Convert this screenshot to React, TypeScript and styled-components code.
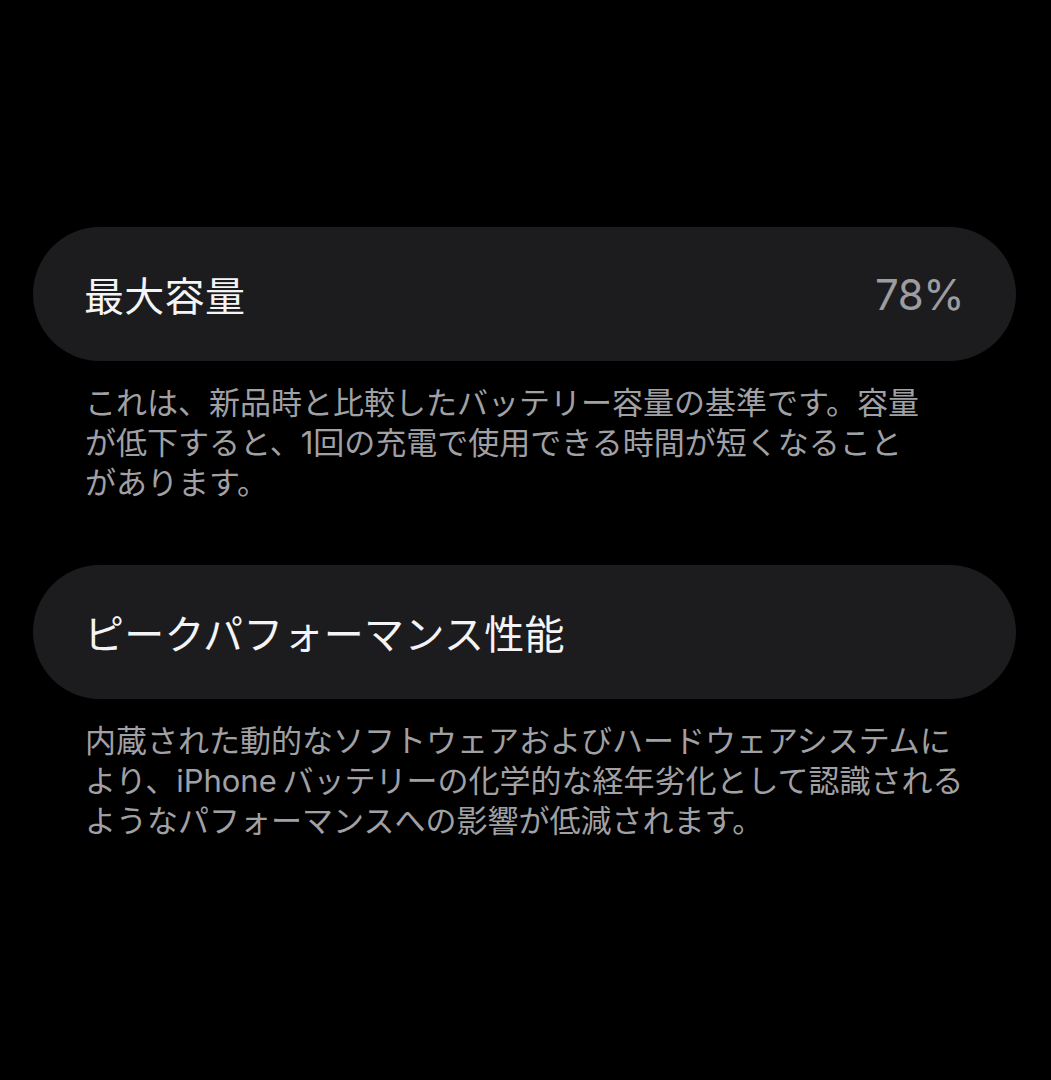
import styled, { createGlobalStyle } from "styled-components"

const GlobalStyle = createGlobalStyle`
  html, body {
    margin: 0;
    padding: 0;
    background: #000;
  }
  body {
    font-family: Inter, "Noto Sans CJK JP", sans-serif;
    -webkit-font-smoothing: antialiased;
  }
`

const Page = styled('div')`
  width: 1051px;
  height: 1080px;
  box-sizing: border-box;
  background: #000;
  padding: 227px 35px 0 33px;
  display: flex;
  flex-direction: column;
`

const Section = styled('section')`
  display: flex;
  flex-direction: column;
  margin-bottom: 62px;
`

const Card = styled('div')`
  height: 134px;
  border-radius: 67px;
  background: #1c1c1e;
  display: flex;
  align-items: center;
  justify-content: space-between;
  padding: 0 52px 0 51px;
  box-sizing: border-box;
`

const Title = styled('span')`
  font-family: "Noto Sans CJK JP", sans-serif;
  font-size: 40px;
  color: #f4f4f6;
  letter-spacing: 0.3px;
`

const Value = styled('span')`
  font-family: Inter, sans-serif;
  font-size: 42px;
  color: #9c9ca1;
  letter-spacing: -0.5px;
`

const Note = styled('p')`
  margin: 22px 0 0;
  padding-left: 52px;
  font-family: Inter, "Noto Sans CJK JP", sans-serif;
  font-size: 31px;
  line-height: 40px;
  color: #a0a0a5;
`

const Line = styled('span')`
  display: block;
  white-space: nowrap;
`

const sections = [
  {
    title: "最大容量",
    value: "78%",
    lines: [
      "これは、新品時と比較したバッテリー容量の基準です。容量",
      "が低下すると、1回の充電で使用できる時間が短くなること",
      "があります。",
    ],
  },
  {
    title: "ピークパフォーマンス性能",
    lines: [
      "内蔵された動的なソフトウェアおよびハードウェアシステムに",
      "より、iPhone\u2009バッテリーの化学的な経年劣化として認識される",
      "ようなパフォーマンスへの影響が低減されます。",
    ],
  },
]

const App = (): JSX.Element => {
  return (
    <Page>
      <GlobalStyle />
      {sections.map((s, i) => (
        <Section key={i}>
          <Card>
            <Title>{s.title}</Title>
            {s.value && <Value>{s.value}</Value>}
          </Card>
          <Note>
            {s.lines.map((l, j) => (
              <Line key={j}>{l}</Line>
            ))}
          </Note>
        </Section>
      ))}
    </Page>
  )
}

export default App
